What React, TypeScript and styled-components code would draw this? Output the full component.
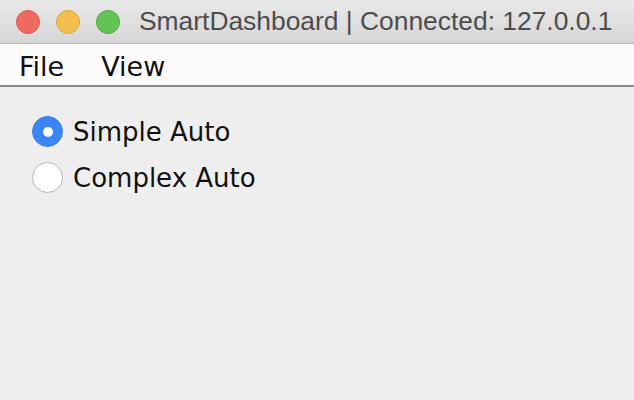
import styled, { createGlobalStyle } from 'styled-components'

const GlobalStyle = createGlobalStyle`
  html, body {
    margin: 0;
    padding: 0;
    width: 634px;
    height: 400px;
    overflow: hidden;
    background: #eeeeee;
  }
`

const Window = styled.div`
  width: 634px;
  height: 400px;
  display: flex;
  flex-direction: column;
  background: #eeeeee;
  font-family: 'DejaVu Sans', sans-serif;
`

const TitleBar = styled.div`
  height: 43px;
  flex-shrink: 0;
  display: flex;
  align-items: center;
  padding-left: 16px;
  background: linear-gradient(#e9e9e9, #d6d6d6);
  border-bottom: 1px solid #b9b9b9;
`

const Lights = styled.div`
  display: flex;
  gap: 16px;
`

const Light = styled.span<{ $fill: string; $edge: string }>`
  width: 24px;
  height: 24px;
  border-radius: 50%;
  box-sizing: border-box;
  background: ${(p) => p.$fill};
  border: 1px solid ${(p) => p.$edge};
`

const Title = styled.div`
  margin-left: 19px;
  font-family: 'Liberation Sans', sans-serif;
  font-size: 26.4px;
  color: #4d4d4d;
  white-space: nowrap;
`

const MenuBar = styled.div`
  height: 43px;
  flex-shrink: 0;
  display: flex;
  align-items: center;
  padding: 3px 0 0 19px;
  box-sizing: border-box;
  gap: 37px;
  background: #fbfbfb;
  border-bottom: 2px solid #8a8a8a;
`

const MenuItem = styled.span`
  font-size: 27px;
  color: #111;
`

const Content = styled.div`
  display: flex;
  flex-direction: column;
  gap: 15px;
  padding: 29px 0 0 32px;
`

const Option = styled.label`
  display: flex;
  align-items: center;
  gap: 10px;
  font-size: 26px;
  color: #111;
  height: 31px;
`

const Radio = styled.span<{ $on?: boolean }>`
  width: 31px;
  height: 31px;
  border-radius: 50%;
  box-sizing: border-box;
  display: flex;
  align-items: center;
  justify-content: center;
  background: ${(p) => (p.$on ? '#3b86f7' : '#ffffff')};
  border: 1px solid ${(p) => (p.$on ? '#3a80ec' : '#b8b8b8')};

  &::after {
    content: '';
    display: ${(p) => (p.$on ? 'block' : 'none')};
    width: 10px;
    height: 10px;
    border-radius: 50%;
    background: #fff;
  }
`

export default function App() {
  return (
    <Window>
      <GlobalStyle />
      <TitleBar>
        <Lights>
          <Light $fill="#ee6a5e" $edge="#d85a4f" />
          <Light $fill="#f5bf4f" $edge="#dca63e" />
          <Light $fill="#62c454" $edge="#53aa45" />
        </Lights>
        <Title>SmartDashboard | Connected: 127.0.0.1</Title>
      </TitleBar>
      <MenuBar>
        <MenuItem>File</MenuItem>
        <MenuItem>View</MenuItem>
      </MenuBar>
      <Content>
        <Option>
          <Radio $on />
          Simple Auto
        </Option>
        <Option>
          <Radio />
          Complex Auto
        </Option>
      </Content>
    </Window>
  )
}
